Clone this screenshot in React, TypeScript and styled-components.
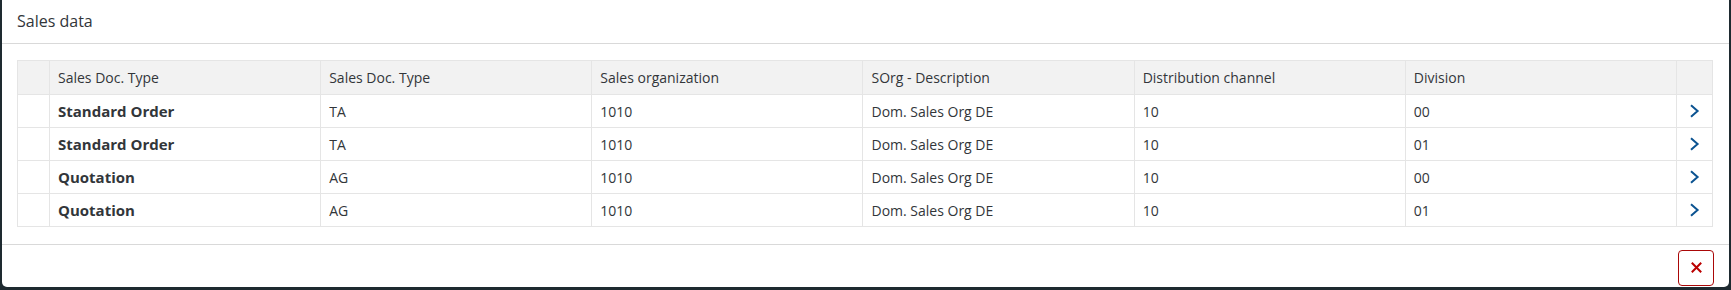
import React from "react";
import styled, { createGlobalStyle } from "styled-components";

const Global = createGlobalStyle`
  html, body { margin: 0; padding: 0; }
  body {
    background: #1e2a30;
    width: 1731px;
    height: 290px;
    overflow: hidden;
    font-family: "Open Sans", "Noto Sans", Arial, sans-serif;
    color: #32363a;
  }
`;

const Dialog = styled.div`
  margin-left: 2px;
  width: 1727px;
  height: 287px;
  background: #ffffff;
  border-radius: 0 0 5px 5px;
  display: flex;
  flex-direction: column;
  box-sizing: border-box;
`;

const Header = styled.div`
  height: 44px;
  box-sizing: border-box;
  display: flex;
  align-items: center;
  padding: 0 15px 2px;
  border-bottom: 1px solid #d9d9d9;
  font-size: 16px;
  color: #32363a;
`;

const Content = styled.div`
  padding: 16px 16px 17px 15px;
  border-bottom: 1px solid #d9d9d9;
`;

const Table = styled.table`
  border-collapse: collapse;
  table-layout: fixed;
  width: 1696px;
  font-size: 14px;
`;

const HeadRow = styled.tr`
  height: 34px;
`;

const BodyRow = styled.tr`
  height: 33px;
`;

const HeadCell = styled.th`
  box-sizing: border-box;
  background: #f2f2f2;
  border: 1px solid #e5e5e5;
  font-weight: 400;
  text-align: left;
  padding: 0 8px;
  color: #32363a;
  white-space: nowrap;
`;

const Cell = styled.td<{ $bold?: boolean }>`
  box-sizing: border-box;
  border: 1px solid #e5e5e5;
  padding: 0 8px;
  font-size: ${(p) => (p.$bold ? "15px" : "14px")};
  font-weight: ${(p) => (p.$bold ? 700 : 400)};
  color: #32363a;
  white-space: nowrap;
`;

const NavCell = styled.td`
  box-sizing: border-box;
  border: 1px solid #e5e5e5;
  text-align: center;
  vertical-align: middle;
  padding: 0 0 0 1px;
  color: #0b5391;
  line-height: 0;
`;

const Footer = styled.div`
  flex: 1;
  display: flex;
  align-items: center;
  justify-content: flex-end;
  padding: 3px 15px 0 0;
`;

const CloseButton = styled.button`
  width: 36px;
  height: 36px;
  box-sizing: border-box;
  border: 1px solid #aa0808;
  border-radius: 4px;
  background: #ffffff;
  display: flex;
  align-items: center;
  justify-content: center;
  padding: 0;
  cursor: pointer;
`;

const Chevron = () => (
  <svg width="11" height="14" viewBox="0 0 11 14" style={{ display: "inline-block" }}>
    <path d="M2 1.3 L8.6 7 L2 12.7" fill="none" stroke="currentColor" strokeWidth="2" />
  </svg>
);

const CloseIcon = () => (
  <svg width="13" height="13" viewBox="0 0 13 13">
    <path d="M1.8 1.8 L11.2 11.2 M11.2 1.8 L1.8 11.2" stroke="#bb0000" strokeWidth="2" fill="none" />
  </svg>
);

const rows = [
  ["Standard Order", "TA", "1010", "Dom. Sales Org DE", "10", "00"],
  ["Standard Order", "TA", "1010", "Dom. Sales Org DE", "10", "01"],
  ["Quotation", "AG", "1010", "Dom. Sales Org DE", "10", "00"],
  ["Quotation", "AG", "1010", "Dom. Sales Org DE", "10", "01"],
];

const headers = [
  "Sales Doc. Type",
  "Sales Doc. Type",
  "Sales organization",
  "SOrg - Description",
  "Distribution channel",
  "Division",
];

export default function App() {
  return (
    <>
      <Global />
      <Dialog>
        <Header>Sales data</Header>
        <Content>
          <Table>
            <colgroup>
              <col style={{ width: 32 }} />
              {headers.map((_, i) => (
                <col key={i} style={{ width: 271 }} />
              ))}
              <col style={{ width: 36 }} />
            </colgroup>
            <thead>
              <HeadRow>
                <HeadCell />
                {headers.map((h, i) => (
                  <HeadCell key={i}>{h}</HeadCell>
                ))}
                <HeadCell />
              </HeadRow>
            </thead>
            <tbody>
              {rows.map((r, i) => (
                <BodyRow key={i}>
                  <Cell />
                  {r.map((v, j) => (
                    <Cell key={j} $bold={j === 0}>
                      {v}
                    </Cell>
                  ))}
                  <NavCell>
                    <Chevron />
                  </NavCell>
                </BodyRow>
              ))}
            </tbody>
          </Table>
        </Content>
        <Footer>
          <CloseButton aria-label="Close">
            <CloseIcon />
          </CloseButton>
        </Footer>
      </Dialog>
    </>
  );
}
